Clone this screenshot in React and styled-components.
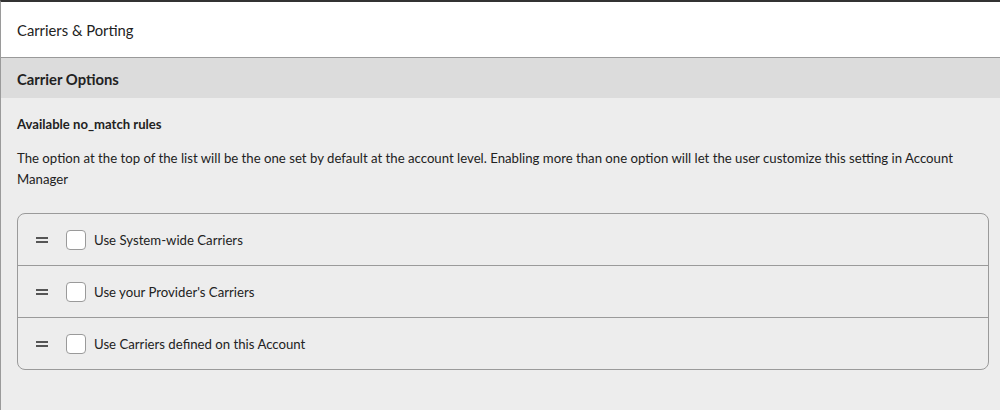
import React from "react";
import styled, { createGlobalStyle } from "styled-components";

const Global = createGlobalStyle`
  html, body {
    margin: 0;
    padding: 0;
    background: #ededed;
  }
  body {
    font-family: Lato, "Noto Sans", sans-serif;
    color: #222;
  }
`;

const Page = styled.div`
  width: 1000px;
  height: 410px;
  box-sizing: border-box;
  border-top: 2px solid #333;
  border-left: 1px solid #9a9a9a;
  background: #ededed;
  overflow: hidden;
`;

const TopBar = styled.header`
  background: #fff;
  height: 56px;
  display: flex;
  align-items: center;
  padding: 1px 0 0 16px;
  box-sizing: border-box;
  font-size: 14.8px;
  border-bottom: 1px solid #9a9a9a;
`;

const SectionHead = styled.div`
  background: #dcdcdc;
  height: 40px;
  display: flex;
  align-items: center;
  padding: 2px 0 0 16px;
  box-sizing: border-box;
  font-size: 14.8px;
  font-weight: 700;
`;

const Body = styled.div`
  padding: 16px 11px 0 16px;
`;

const Title = styled.h3`
  margin: 0;
  font-size: 13.1px;
  font-weight: 700;
  line-height: 20px;
`;

const Desc = styled.p`
  margin: 14px 0 0;
  font-size: 13.2px;
  line-height: 21px;
`;

const List = styled.div`
  margin-top: 23px;
  border: 1px solid #9a9a9a;
  border-radius: 8px;
  overflow: hidden;
`;

const Row = styled.div`
  height: 51px;
  display: flex;
  align-items: center;
  padding-left: 18px;
  font-size: 13.2px;
  & + & {
    border-top: 1px solid #9a9a9a;
  }
`;

const Handle = styled.span`
  width: 12px;
  display: flex;
  flex-direction: column;
  gap: 2px;
  margin-right: 18px;
  &::before,
  &::after {
    content: "";
    height: 2px;
    background: #555;
  }
`;

const Box = styled.span`
  width: 18px;
  height: 18px;
  border: 1px solid #9a9a9a;
  border-radius: 4px;
  background: #fff;
  margin-right: 8px;
`;

const options = [
  "Use System-wide Carriers",
  "Use your Provider's Carriers",
  "Use Carriers defined on this Account",
];

export default function App() {
  return (
    <Page>
      <Global />
      <TopBar>Carriers &amp; Porting</TopBar>
      <SectionHead>Carrier Options</SectionHead>
      <Body>
        <Title>Available no_match rules</Title>
        <Desc>
          The option at the top of the list will be the one set by default at
          the account level. Enabling more than one option will let the user
          customize this setting in Account Manager
        </Desc>
        <List>
          {options.map((o) => (
            <Row key={o}>
              <Handle />
              <Box />
              {o}
            </Row>
          ))}
        </List>
      </Body>
    </Page>
  );
}
